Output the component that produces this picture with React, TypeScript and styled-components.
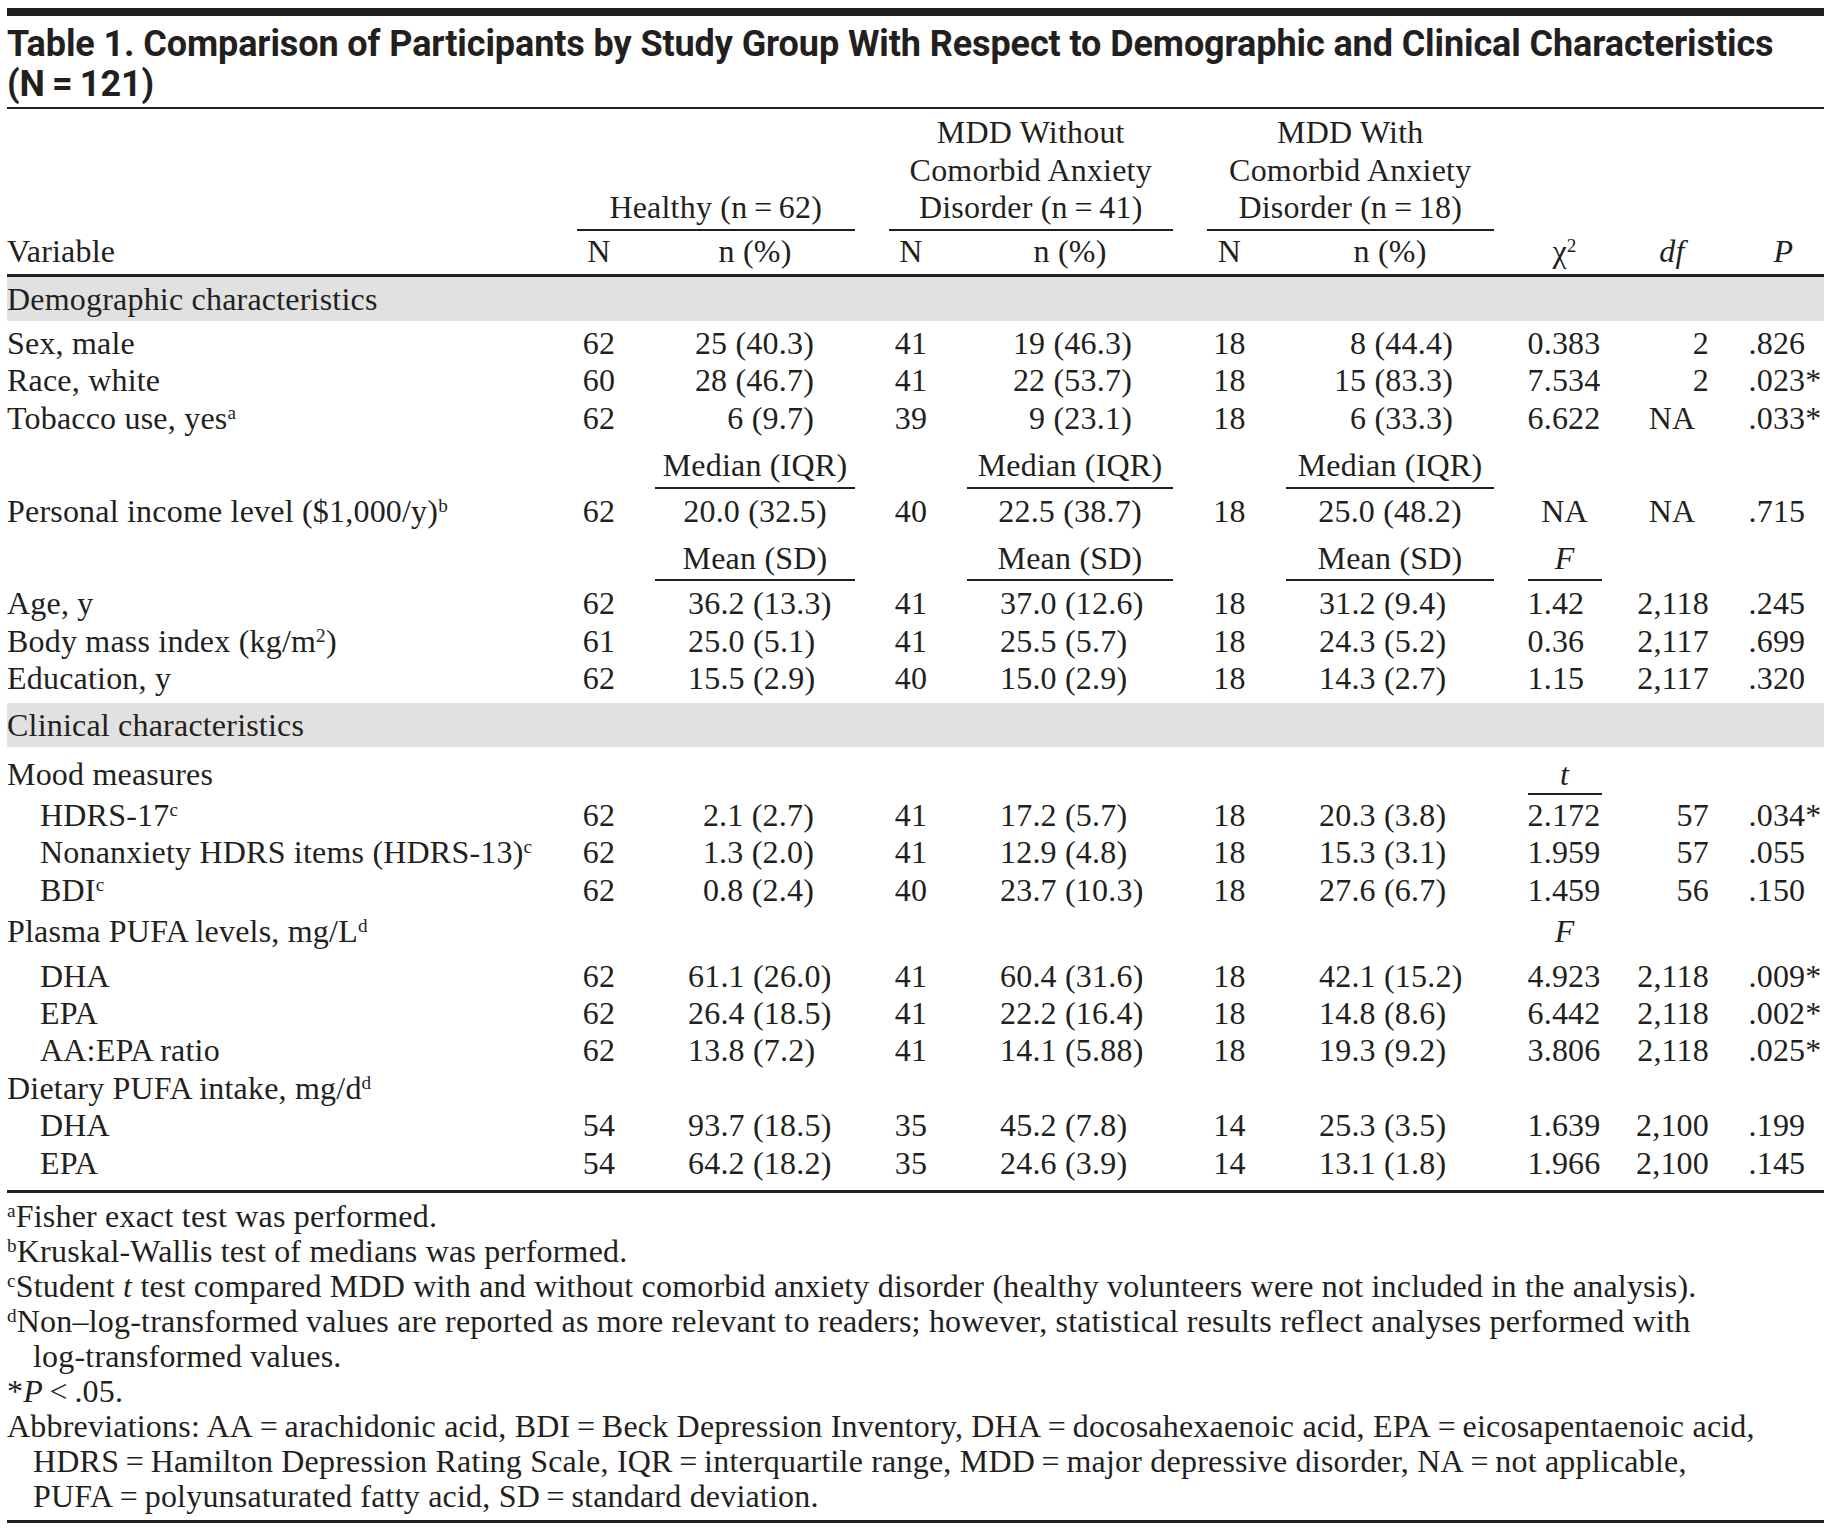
import React from 'react';
import styled, {createGlobalStyle} from 'styled-components';

const INK = '#231f20';
const COLS = '536px 45px 200px 45px 206px 46px 208px 74px 74px 1fr';
const GAP = '33.5px';
const EQ = '\u2009=\u2009';

type Align = 'l' | 'r' | 'c';

const alignMap = {l: 'left', r: 'right', c: 'center'};

const GlobalStyle = createGlobalStyle`
    html, body {
        margin: 0;
        padding: 0;
        background: #fff;
    }
    body {
        font-family: "Liberation Serif", "Times New Roman", serif;
        color: ${INK};
    }
`;

const Page = styled.div`
    width: 1817px;
    padding: 8px 0 0 7px;
    font-size: 32px;
    letter-spacing: 0.2px;
`;

const TopBar = styled.div`
    height: 8px;
    background: ${INK};
`;

const Title = styled.h1`
    margin: 8px 0 0;
    font-family: Roboto, "Liberation Sans", sans-serif;
    font-weight: 700;
    font-size: 36px;
    line-height: 40px;
    letter-spacing: -0.1px;
    white-space: nowrap;
`;

const Rule = styled.div<{$h: number; $mt: number}>`
    height: ${(p) => p.$h}px;
    margin-top: ${(p) => p.$mt}px;
    background: ${INK};
`;

const HeadGrid = styled.div`
    display: grid;
    grid-template-columns: ${COLS};
    column-gap: ${GAP};
    padding-top: 5px;
    border-bottom: 3px solid ${INK};
`;

const GroupHead = styled.div<{$col: number}>`
    grid-row: 1;
    grid-column: ${(p) => p.$col} / span 2;
    align-self: end;
    padding-bottom: 2px;
    border-bottom: 2px solid ${INK};
    text-align: center;
    line-height: 37.5px;
    white-space: nowrap;
`;

const ColHead = styled.div<{$col: number; $align: Align}>`
    grid-row: 2;
    grid-column: ${(p) => p.$col};
    padding: 2px 0 4px;
    line-height: 37.4px;
    text-align: ${(p) => alignMap[p.$align]};
`;

const Band = styled.div<{$mt?: number}>`
    height: 44px;
    margin-top: ${(p) => p.$mt ?? 0}px;
    background: #e1e1e1;
    line-height: 44px;
`;

const Row = styled.div<{$mt: number}>`
    display: grid;
    grid-template-columns: ${COLS};
    column-gap: ${GAP};
    margin-top: ${(p) => p.$mt}px;
    line-height: 37.4px;
    white-space: nowrap;
`;

const Label = styled.div<{$indent: boolean}>`
    grid-column: 1;
    padding-left: ${(p) => (p.$indent ? 33 : 0)}px;
`;

const Cell = styled.div<{$col: number; $align: Align}>`
    grid-column: ${(p) => p.$col};
    text-align: ${(p) => alignMap[p.$align]};
    padding-left: ${(p) => (p.$align === 'l' && p.$col < 8 ? 33 : 0)}px;
    padding-right: ${(p) => (p.$align === 'r' && p.$col < 8 ? 41 : 0)}px;
`;

const PCell = styled.div`
    grid-column: 10;
    padding-left: 6px;
`;

const StatHead = styled.div<{$col: number; $pb: number; $line: boolean}>`
    grid-column: ${(p) => p.$col};
    padding-bottom: ${(p) => p.$pb}px;
    border-bottom: 2px solid ${(p) => (p.$line ? INK : 'transparent')};
    text-align: center;
`;

const Notes = styled.div`
    margin-top: 6px;
`;

const Note = styled.div<{$cont?: boolean}>`
    padding-left: ${(p) => (p.$cont ? 26 : 0)}px;
    line-height: 35px;
    white-space: nowrap;
`;

const Sup = styled.sup`
    font-size: 0.6em;
    line-height: 0;
    vertical-align: 0.5em;
`;

const I = styled.i`
    font-style: italic;
`;

interface DataDef {
    kind: 'data';
    label: React.ReactNode;
    indent?: boolean;
    vals: string[];
    stat: string;
    df: string;
    p: string;
    align: Align[];
    mt?: number;
}

interface SubDef {
    kind: 'sub';
    label?: React.ReactNode;
    heads?: string[];
    stat?: React.ReactNode;
    line?: boolean;
    mt: number;
    pb: number;
}

type RowDef = DataDef | SubDef;

const R3: Align[] = ['r', 'r', 'r'];
const L3: Align[] = ['l', 'l', 'l'];
const C3: Align[] = ['c', 'c', 'c'];
const MOOD: Align[] = ['r', 'l', 'l'];

const demographic: RowDef[] = [
    {kind: 'data', label: 'Sex, male', vals: ['62', '25 (40.3)', '41', '19 (46.3)', '18', '8 (44.4)'], stat: '0.383', df: '2', p: '.826', align: R3, mt: 4},
    {kind: 'data', label: 'Race, white', vals: ['60', '28 (46.7)', '41', '22 (53.7)', '18', '15 (83.3)'], stat: '7.534', df: '2', p: '.023*', align: R3},
    {kind: 'data', label: <>Tobacco use, yes<Sup>a</Sup></>, vals: ['62', '6 (9.7)', '39', '9 (23.1)', '18', '6 (33.3)'], stat: '6.622', df: 'NA', p: '.033*', align: R3},
    {kind: 'sub', heads: ['Median (IQR)', 'Median (IQR)', 'Median (IQR)'], line: true, mt: 10, pb: 2},
    {kind: 'data', label: <>Personal income level ($1,000/y)<Sup>b</Sup></>, vals: ['62', '20.0 (32.5)', '40', '22.5 (38.7)', '18', '25.0 (48.2)'], stat: 'NA', df: 'NA', p: '.715', align: C3, mt: 4},
    {kind: 'sub', heads: ['Mean (SD)', 'Mean (SD)', 'Mean (SD)'], stat: <I>F</I>, line: true, mt: 10, pb: 2},
    {kind: 'data', label: 'Age, y', vals: ['62', '36.2 (13.3)', '41', '37.0 (12.6)', '18', '31.2 (9.4)'], stat: '1.42', df: '2,118', p: '.245', align: L3, mt: 4},
    {kind: 'data', label: <>Body mass index (kg/m<Sup>2</Sup>)</>, vals: ['61', '25.0 (5.1)', '41', '25.5 (5.7)', '18', '24.3 (5.2)'], stat: '0.36', df: '2,117', p: '.699', align: L3},
    {kind: 'data', label: 'Education, y', vals: ['62', '15.5 (2.9)', '40', '15.0 (2.9)', '18', '14.3 (2.7)'], stat: '1.15', df: '2,117', p: '.320', align: L3},
];

const clinical: RowDef[] = [
    {kind: 'sub', label: 'Mood measures', stat: <I>t</I>, line: true, mt: 9, pb: 0},
    {kind: 'data', label: <>HDRS-17<Sup>c</Sup></>, indent: true, vals: ['62', '2.1 (2.7)', '41', '17.2 (5.7)', '18', '20.3 (3.8)'], stat: '2.172', df: '57', p: '.034*', align: MOOD, mt: 2},
    {kind: 'data', label: <>Nonanxiety HDRS items (HDRS-13)<Sup>c</Sup></>, indent: true, vals: ['62', '1.3 (2.0)', '41', '12.9 (4.8)', '18', '15.3 (3.1)'], stat: '1.959', df: '57', p: '.055', align: MOOD},
    {kind: 'data', label: <>BDI<Sup>c</Sup></>, indent: true, vals: ['62', '0.8 (2.4)', '40', '23.7 (10.3)', '18', '27.6 (6.7)'], stat: '1.459', df: '56', p: '.150', align: MOOD},
    {kind: 'sub', label: <>Plasma PUFA levels, mg/L<Sup>d</Sup></>, stat: <I>F</I>, line: false, mt: 4, pb: 0},
    {kind: 'data', label: 'DHA', indent: true, vals: ['62', '61.1 (26.0)', '41', '60.4 (31.6)', '18', '42.1 (15.2)'], stat: '4.923', df: '2,118', p: '.009*', align: L3, mt: 5},
    {kind: 'data', label: 'EPA', indent: true, vals: ['62', '26.4 (18.5)', '41', '22.2 (16.4)', '18', '14.8 (8.6)'], stat: '6.442', df: '2,118', p: '.002*', align: L3},
    {kind: 'data', label: 'AA:EPA ratio', indent: true, vals: ['62', '13.8 (7.2)', '41', '14.1 (5.88)', '18', '19.3 (9.2)'], stat: '3.806', df: '2,118', p: '.025*', align: L3},
    {kind: 'sub', label: <>Dietary PUFA intake, mg/d<Sup>d</Sup></>, mt: 0, pb: 0},
    {kind: 'data', label: 'DHA', indent: true, vals: ['54', '93.7 (18.5)', '35', '45.2 (7.8)', '14', '25.3 (3.5)'], stat: '1.639', df: '2,100', p: '.199', align: L3},
    {kind: 'data', label: 'EPA', indent: true, vals: ['54', '64.2 (18.2)', '35', '24.6 (3.9)', '14', '13.1 (1.8)'], stat: '1.966', df: '2,100', p: '.145', align: L3},
];

const groups = [
    {lines: ['Healthy (n' + EQ + '62)']},
    {lines: ['MDD Without', 'Comorbid Anxiety', 'Disorder (n' + EQ + '41)']},
    {lines: ['MDD With', 'Comorbid Anxiety', 'Disorder (n' + EQ + '18)']},
];

const DataRow = ({row}: {row: DataDef}) => (
    <Row $mt={row.mt ?? 0}>
        <Label $indent={!!row.indent}>{row.label}</Label>
        {row.vals.map((v, i) =>
            i % 2 === 0 ? (
                <Cell key={i} $col={i + 2} $align="c">{v}</Cell>
            ) : (
                <Cell key={i} $col={i + 2} $align={row.align[(i - 1) / 2]}>{v}</Cell>
            ),
        )}
        <Cell $col={8} $align={row.stat === 'NA' ? 'c' : 'l'}>{row.stat}</Cell>
        <Cell $col={9} $align={row.df === 'NA' ? 'c' : 'r'}>{row.df}</Cell>
        <PCell>{row.p}</PCell>
    </Row>
);

const SubRow = ({row}: {row: SubDef}) => (
    <Row $mt={row.mt}>
        {row.label && <Label $indent={false}>{row.label}</Label>}
        {row.heads?.map((h, i) => (
            <StatHead key={i} $col={i * 2 + 3} $pb={row.pb} $line>{h}</StatHead>
        ))}
        {row.stat && <StatHead $col={8} $pb={row.pb} $line={!!row.line}>{row.stat}</StatHead>}
    </Row>
);

const renderRows = (rows: RowDef[]) =>
    rows.map((r, i) => (r.kind === 'data' ? <DataRow key={i} row={r} /> : <SubRow key={i} row={r} />));

export default function App() {
    return (
        <>
            <GlobalStyle />
            <Page>
                <TopBar />
                <Title>
                    Table 1. Comparison of Participants by Study Group With Respect to Demographic and Clinical Characteristics
                    <br />
                    (N{EQ}121)
                </Title>
                <Rule $h={2} $mt={3} />
                <HeadGrid>
                    {groups.map((g, i) => (
                        <GroupHead key={i} $col={i * 2 + 2}>
                            {g.lines.map((l) => <div key={l}>{l}</div>)}
                        </GroupHead>
                    ))}
                    <ColHead $col={1} $align="l">Variable</ColHead>
                    {[0, 1, 2].map((i) => (
                        <React.Fragment key={i}>
                            <ColHead $col={i * 2 + 2} $align="c">N</ColHead>
                            <ColHead $col={i * 2 + 3} $align="c">n (%)</ColHead>
                        </React.Fragment>
                    ))}
                    <ColHead $col={8} $align="c">χ<Sup>2</Sup></ColHead>
                    <ColHead $col={9} $align="c"><I>df</I></ColHead>
                    <ColHead $col={10} $align="c"><I>P</I></ColHead>
                </HeadGrid>
                <Band>Demographic characteristics</Band>
                {renderRows(demographic)}
                <Band $mt={5}>Clinical characteristics</Band>
                {renderRows(clinical)}
                <Rule $h={3} $mt={8} />
                <Notes>
                    <Note><Sup>a</Sup>Fisher exact test was performed.</Note>
                    <Note><Sup>b</Sup>Kruskal-Wallis test of medians was performed.</Note>
                    <Note><Sup>c</Sup>Student <I>t</I> test compared MDD with and without comorbid anxiety disorder (healthy volunteers were not included in the analysis).</Note>
                    <Note><Sup>d</Sup>Non–log-transformed values are reported as more relevant to readers; however, statistical results reflect analyses performed with</Note>
                    <Note $cont>log-transformed values.</Note>
                    <Note>*<I>P</I>{'\u2009<\u2009'}.05.</Note>
                    <Note>Abbreviations: AA{EQ}arachidonic acid, BDI{EQ}Beck Depression Inventory, DHA{EQ}docosahexaenoic acid, EPA{EQ}eicosapentaenoic acid,</Note>
                    <Note $cont>HDRS{EQ}Hamilton Depression Rating Scale, IQR{EQ}interquartile range, MDD{EQ}major depressive disorder, NA{EQ}not applicable,</Note>
                    <Note $cont>PUFA{EQ}polyunsaturated fatty acid, SD{EQ}standard deviation.</Note>
                </Notes>
                <Rule $h={3} $mt={6} />
            </Page>
        </>
    );
}
